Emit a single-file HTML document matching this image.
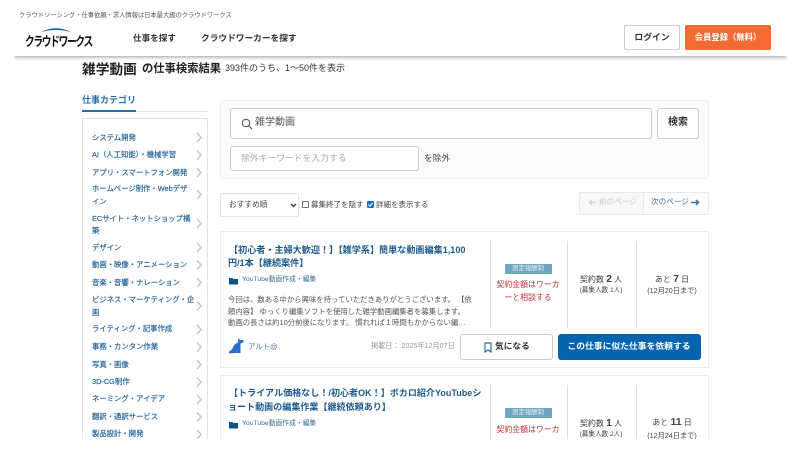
<!DOCTYPE html>
<html lang="ja"><head><meta charset="utf-8"><style>
html,body{margin:0;padding:0;background:#fff;width:798px;height:463px;overflow:hidden}
body{position:relative;font-family:"Liberation Sans","Noto Sans CJK JP",sans-serif;color:#333}
.t{position:absolute;white-space:nowrap;line-height:1}
.c{transform:translateX(-50%)}
.b{position:absolute;box-sizing:border-box}
#clip{position:absolute;left:0;top:0;width:798px;height:439px;overflow:hidden;filter:blur(.35px)}
.side{color:#1d5f94;font-size:7.35px;left:92px;-webkit-text-stroke:.15px #1d5f94}
.div{position:absolute;width:1px;background:#ddd}
</style></head><body><div id="clip">
<div class="b" style="left:14px;top:0;width:773px;height:56px;background:#fff;box-shadow:0 1px 4px rgba(0,0,0,.4);clip-path:inset(0 0 -10px 0)"></div>
<div class="t" style="left:19px;top:13px;font-size:6.27px;color:#555">クラウドソーシング・仕事依頼・求人情報は日本最大級のクラウドワークス</div>
<svg class="b" style="left:39px;top:26px" width="34" height="8"><path d="M1 6.500Q17 -2 33 6.500Q17 1.500 1 6.500Z" fill="#0f6cb0"/></svg>
<div class="t" style="left:25px;top:36px;font-size:11.6px;font-weight:700;color:#111;letter-spacing:-1.6px;transform:scale(.84,1.12);transform-origin:0 0">クラウドワークス</div>
<div class="t" style="left:133px;top:34px;font-size:8.6px;font-weight:700;color:#333">仕事を探す</div>
<div class="t" style="left:201px;top:34px;font-size:8.7px;font-weight:700;color:#333">クラウドワーカーを探す</div>
<div class="b" style="left:624px;top:25px;width:56px;height:25px;border:1px solid #ccc;border-radius:2px;background:#fff"></div>
<div class="t c" style="left:652px;top:33px;font-size:8.8px;font-weight:700;color:#333">ログイン</div>
<div class="b" style="left:685px;top:25px;width:86px;height:25px;border-radius:2px;background:#f36a32"></div>
<div class="t c" style="left:728px;top:33px;font-size:8.3px;font-weight:700;color:#fff">会員登録（無料）</div>

<div class="t" style="left:82px;top:63px;font-size:13.7px;font-weight:700;color:#222">雑学動画</div>
<div class="t" style="left:142px;top:64px;font-size:11.3px;font-weight:700;color:#222">の仕事検索結果</div>
<div class="t" style="left:225px;top:64px;font-size:9px;color:#333">393件のうち、1〜50件を表示</div>

<div class="t" style="left:82px;top:96px;font-size:9px;font-weight:700;color:#1f6fb0">仕事カテゴリ</div>
<div class="b" style="left:82px;top:111px;width:126px;height:1px;background:#e8e8e8"></div>
<div class="b" style="left:82px;top:110px;width:54px;height:2px;background:#1f6fb0"></div>
<div class="b" style="left:82px;top:118px;width:126px;height:340px;border:1px solid #e3e3e3;background:#fff"></div>
<div class="t side" style="top:134px">システム開発</div>
<div class="t side" style="top:151px">AI（人工知能）・機械学習</div>
<div class="t side" style="top:169px">アプリ・スマートフォン開発</div>
<div class="t side" style="top:185px">ホームページ制作・Webデザ</div>
<div class="t side" style="top:198px">イン</div>
<div class="t side" style="top:215px">ECサイト・ネットショップ構</div>
<div class="t side" style="top:227px">築</div>
<div class="t side" style="top:244px">デザイン</div>
<div class="t side" style="top:261px">動画・映像・アニメーション</div>
<div class="t side" style="top:279px">音楽・音響・ナレーション</div>
<div class="t side" style="top:296px">ビジネス・マーケティング・企</div>
<div class="t side" style="top:309px">画</div>
<div class="t side" style="top:325px">ライティング・記事作成</div>
<div class="t side" style="top:343px">事務・カンタン作業</div>
<div class="t side" style="top:361px">写真・画像</div>
<div class="t side" style="top:378px">3D-CG制作</div>
<div class="t side" style="top:395px">ネーミング・アイデア</div>
<div class="t side" style="top:413px">翻訳・通訳サービス</div>
<div class="t side" style="top:430px">製品設計・開発</div>
<svg class="b" style="left:0;top:0" width="220" height="439" fill="none" stroke="#c8c8c8" stroke-width="1.6">
<path d="M197 133l4 4.500-4 4.500M197 150.500l4 4.500-4 4.500M197 168l4 4.500-4 4.500M197 190l4 4.500-4 4.500M197 219l4 4.500-4 4.500M197 243l4 4.500-4 4.500M197 260.500l4 4.500-4 4.500M197 278l4 4.500-4 4.500M197 301.500l4 4.500-4 4.500M197 325l4 4.500-4 4.500M197 342.500l4 4.500-4 4.500M197 360l4 4.500-4 4.500M197 377.500l4 4.500-4 4.500M197 395l4 4.500-4 4.500M197 412.500l4 4.500-4 4.500M197 430l4 4.500-4 4.500"/></svg>

<div class="b" style="left:220px;top:100px;width:489px;height:79px;background:#fbfbfb;border:1px solid #efefef;border-radius:3px"></div>
<div class="b" style="left:230px;top:108px;width:422px;height:31px;background:#fff;border:1px solid #ccc;border-radius:3px"></div>
<svg class="b" style="left:241px;top:118px" width="12" height="12" fill="none" stroke="#555" stroke-width="1.1"><circle cx="5" cy="5" r="3.700"/><path d="M7.700 7.700L11 11"/></svg>
<div class="t" style="left:255px;top:118px;font-size:10px;color:#555">雑学動画</div>
<div class="b" style="left:657px;top:108px;width:42px;height:31px;background:#fff;border:1px solid #ccc;border-radius:3px"></div>
<div class="t c" style="left:678px;top:118px;font-size:10px;font-weight:700;color:#333">検索</div>
<div class="b" style="left:230px;top:146px;width:189px;height:25px;background:#fff;border:1px solid #ccc;border-radius:3px"></div>
<div class="t" style="left:241px;top:154px;font-size:8.8px;color:#aaa">除外キーワードを入力する</div>
<div class="t" style="left:424px;top:154px;font-size:8.7px;color:#444">を除外</div>

<div class="b" style="left:220px;top:193px;width:79px;height:24px;background:#fff;border:1px solid #e4e4e4;border-radius:2px"></div>
<div class="t" style="left:229px;top:201px;font-size:7.7px;color:#444">おすすめ順</div>
<svg class="b" style="left:290px;top:203px" width="7" height="5" fill="none" stroke="#333" stroke-width="1.300"><path d="M1 1l2.500 2.500L6 1"/></svg>
<div class="b" style="left:302px;top:201px;width:7px;height:7px;background:#fff;border:1px solid #777;border-radius:1px"></div>
<div class="t" style="left:311px;top:201px;font-size:7.5px;color:#444">募集終了を隠す</div>
<div class="b" style="left:367px;top:201px;width:7px;height:7px;background:#1f6fc0;border-radius:1px"></div>
<svg class="b" style="left:367px;top:201px" width="7" height="7" fill="none" stroke="#fff" stroke-width="1"><path d="M1.300 3.500l1.700 1.700 2.800-3.200"/></svg>
<div class="t" style="left:376px;top:201px;font-size:7.5px;color:#444">詳細を表示する</div>

<div class="b" style="left:579px;top:192px;width:65px;height:23px;background:#f8f8f8;border:1px solid #e9e9e9;border-radius:2px 0 0 2px"></div>
<div class="b" style="left:643px;top:192px;width:66px;height:23px;background:#fcfcfc;border:1px solid #e9e9e9;border-radius:0 2px 2px 0"></div>
<svg class="b" style="left:588px;top:199px" width="9" height="7" fill="none" stroke="#ccc" stroke-width="1.200"><path d="M8 3.500H1.500M4 1L1.500 3.500 4 6"/></svg>
<div class="t" style="left:599px;top:198px;font-size:7.6px;color:#ccc">前のページ</div>
<div class="t" style="left:651px;top:198px;font-size:7.6px;color:#45789f">次のページ</div>
<svg class="b" style="left:691px;top:199px" width="9" height="7" fill="none" stroke="#3d6f98" stroke-width="1.500"><path d="M0 3.500H7.500M5 1l2.500 2.500L5 6"/></svg>

<!-- card 1 -->
<div class="b" style="left:220px;top:231px;width:489px;height:137px;background:#fff;border:1px solid #ececec"></div>
<div class="t" style="left:229px;top:246px;font-size:9.1px;font-weight:700;color:#1d5a8c">【初心者・主婦大歓迎！】【雑学系】簡単な動画編集1,100</div>
<div class="t" style="left:228px;top:259px;font-size:9.1px;font-weight:700;color:#1d5a8c">円/1本【継続案件】</div>
<svg class="b" style="left:229px;top:277px" width="10" height="8"><path d="M0 1h3.500l1 1H9v5.500H0z" fill="#14507f"/></svg>
<div class="t" style="left:242px;top:277px;font-size:6.8px;color:#3d6f98">YouTube動画作成・編集</div>
<div class="t" style="left:228px;top:296px;font-size:7.37px;color:#555">今回は、数ある中から興味を持っていただきありがとうございます。 【依</div>
<div class="t" style="left:228px;top:308px;font-size:7.37px;color:#555">頼内容】 ゆっくり編集ソフトを使用した雑学動画編集者を募集します。</div>
<div class="t" style="left:228px;top:319px;font-size:7.37px;color:#555">動画の長さは約10分前後になります。 慣れれば１時間もかからない編…</div>
<svg class="b" style="left:228px;top:337px" width="17" height="17"><path d="M1 16c-.500-2 2.500-2.500 3.500-4.500 1-3 3-5 5.500-6L10.500 1l1.500 2h3l1 2-3.500 1.500v9.500H6.500c-2 0-4.500 1-5.500 0z" fill="#2a6fd0"/></svg>
<div class="t" style="left:248px;top:343px;font-size:7.4px;color:#4a7aa0">アルト@</div>
<div class="t" style="left:371px;top:343px;font-size:7.15px;color:#999">掲載日： 2025年12月07日</div>
<div class="b" style="left:460px;top:334px;width:93px;height:26px;background:#fff;border:1px solid #ccc;border-radius:3px"></div>
<svg class="b" style="left:484px;top:342px" width="8" height="11" fill="none" stroke="#2f6ea3" stroke-width="1.200"><path d="M1 1h6v9L4 8 1 10z"/></svg>
<div class="t" style="left:495px;top:342px;font-size:8.7px;font-weight:700;color:#333">気になる</div>
<div class="b" style="left:558px;top:334px;width:143px;height:26px;background:#0564ad;border-radius:3px"></div>
<div class="t c" style="left:629px;top:342px;font-size:8.8px;font-weight:700;color:#fff">この仕事に似た仕事を依頼する</div>
<div class="div" style="left:490px;top:241px;height:87px"></div>
<div class="div" style="left:567px;top:241px;height:87px"></div>
<div class="div" style="left:636px;top:241px;height:87px"></div>
<div class="b" style="left:505px;top:264px;width:47px;height:10px;background:#6fa5c0;border-radius:1px"></div>
<div class="t c" style="left:528px;top:266px;font-size:6.3px;color:#e8f2f6">固定報酬制</div>
<div class="t c" style="left:528px;top:281px;font-size:7.9px;color:#c0313a">契約金額はワーカ</div>
<div class="t c" style="left:528px;top:294px;font-size:7.9px;color:#c0313a">ーと相談する</div>
<div class="t c" style="left:601px;top:274px;font-size:8px;color:#444">契約数 <b style="font-size:10.500px">2</b> 人</div>
<div class="t c" style="left:601px;top:288px;font-size:6.6px;color:#444">(募集人数 1人)</div>
<div class="t c" style="left:672px;top:274px;font-size:8px;color:#444">あと <b style="font-size:10.500px">7</b> 日</div>
<div class="t c" style="left:672px;top:287px;font-size:7.2px;color:#444">(12月20日まで)</div>

<!-- card 2 -->
<div class="b" style="left:220px;top:375px;width:489px;height:100px;background:#fff;border:1px solid #ececec"></div>
<div class="t" style="left:229px;top:389px;font-size:9.05px;font-weight:700;color:#1d5a8c">【トライアル価格なし！/初心者OK！】ボカロ紹介YouTubeシ</div>
<div class="t" style="left:228px;top:403px;font-size:9.05px;font-weight:700;color:#1d5a8c">ョート動画の編集作業【継続依頼あり】</div>
<svg class="b" style="left:229px;top:421px" width="10" height="8"><path d="M0 1h3.500l1 1H9v5.500H0z" fill="#14507f"/></svg>
<div class="t" style="left:242px;top:421px;font-size:6.8px;color:#3d6f98">YouTube動画作成・編集</div>
<div class="div" style="left:490px;top:385px;height:60px"></div>
<div class="div" style="left:567px;top:385px;height:60px"></div>
<div class="div" style="left:636px;top:385px;height:60px"></div>
<div class="b" style="left:505px;top:408px;width:47px;height:10px;background:#6fa5c0;border-radius:1px"></div>
<div class="t c" style="left:528px;top:410px;font-size:6.3px;color:#e8f2f6">固定報酬制</div>
<div class="t c" style="left:528px;top:426px;font-size:7.9px;color:#c0313a">契約金額はワーカ</div>
<div class="t c" style="left:601px;top:418px;font-size:8px;color:#444">契約数 <b style="font-size:10.500px">1</b> 人</div>
<div class="t c" style="left:601px;top:432px;font-size:6.6px;color:#444">(募集人数 2人)</div>
<div class="t c" style="left:672px;top:417px;font-size:8px;color:#444">あと <b style="font-size:10.500px">11</b> 日</div>
<div class="t c" style="left:672px;top:432px;font-size:7.2px;color:#444">(12月24日まで)</div>
</div></body></html>
